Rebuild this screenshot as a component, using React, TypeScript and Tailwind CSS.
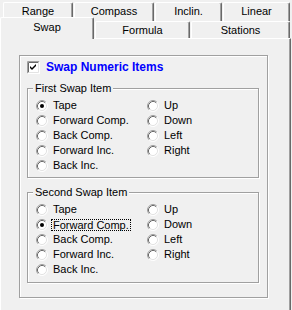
import React from 'react';

const Radio = ({ checked }: { checked?: boolean }) => (
  <svg width="12" height="12" viewBox="0 0 12 12" className="shrink-0">
    <circle cx="6" cy="6" r="5" fill="#fff" />
    <path d="M2.11 9.89 A5.5 5.5 0 0 1 9.89 2.11" fill="none" stroke="#a0a0a0" />
    <path d="M9.89 2.11 A5.5 5.5 0 0 1 2.11 9.89" fill="none" stroke="#fff" />
    <path d="M2.82 9.18 A4.5 4.5 0 0 1 9.18 2.82" fill="none" stroke="#696969" />
    <path d="M9.18 2.82 A4.5 4.5 0 0 1 2.82 9.18" fill="none" stroke="#e3e3e3" />
    {checked && <circle cx="6" cy="6" r="2" fill="#000" />}
  </svg>
);

const Checkbox = () => (
  <svg width="13" height="13" viewBox="0 0 13 13" className="shrink-0">
    <rect x="0" y="0" width="13" height="13" fill="#fff" />
    <path d="M0.5 12.5V0.5H12.5" fill="none" stroke="#a0a0a0" />
    <path d="M1.5 11.5V1.5H11.5" fill="none" stroke="#696969" />
    <path d="M0.5 12.5H12.5V0.5" fill="none" stroke="#fff" />
    <path d="M1.5 11.5H11.5V1.5" fill="none" stroke="#e3e3e3" />
    <path d="M3 5L5 7L9 3V5L5 9L3 7Z" fill="#000" />
  </svg>
);

const Option = ({ label, checked, focus }: { label: string; checked?: boolean; focus?: boolean }) => (
  <div className="flex items-center h-[15px] gap-[5px]">
    <Radio checked={checked} />
    {focus ? (
      <span className="border border-dotted border-black leading-[10px] px-[1px] -mx-[2px]">{label}</span>
    ) : (
      <span>{label}</span>
    )}
  </div>
);

const left = ['Tape', 'Forward Comp.', 'Back Comp.', 'Forward Inc.', 'Back Inc.'];
const right = ['Up', 'Down', 'Left', 'Right'];

const SwapGroup = ({ label, selected, focus, tall }: { label: string; selected: string; focus?: boolean; tall?: boolean }) => (
  <div
    className={`relative mt-[14px] w-[232px] ${tall ? 'h-[91px]' : 'h-[90px]'} border border-[#a0a0a0] shadow-[inset_1px_1px_0_#fff,1px_1px_0_#fff] pt-[9px] pl-[8px] flex`}
  >
    <span className="absolute left-[5px] top-[-7px] px-[2px] bg-[#f0f0f0]">{label}</span>
    <div className="flex flex-col w-[111px]">
      {left.map((l) => (
        <Option key={l} label={l} checked={l === selected} focus={focus && l === selected} />
      ))}
    </div>
    <div className="flex flex-col">
      {right.map((l) => (
        <Option key={l} label={l} />
      ))}
    </div>
  </div>
);

const tabEdge =
  'flex justify-center border-t border-l border-white border-r border-r-[#696969] shadow-[inset_-1px_0_0_#a0a0a0] rounded-t-[2px]';

export default function App() {
  return (
    <div className="w-[292px] h-[310px] bg-[#f0f0f0] overflow-hidden text-[11px] leading-[13px] text-black font-['Liberation_Sans',Arial,sans-serif]">
      <div className="flex gap-[1px] pl-[3px] pt-[2px] h-[21px]">
        <div className={`${tabEdge} w-[70px] h-[19px] pt-[2px]`}>Range</div>
        <div className={`${tabEdge} w-[80px] h-[19px] pt-[2px]`}>Compass</div>
        <div className={`${tabEdge} w-[67px] h-[19px] pt-[2px]`}>Inclin.</div>
        <div className={`${tabEdge} w-[67px] h-[19px] pt-[2px]`}>Linear</div>
      </div>
      <div className="flex items-end gap-[1px] h-[21px] mt-[-4px]">
        <div className={`${tabEdge} relative z-10 w-[94px] h-[22px] mb-[-1px] pt-[3px] bg-[#f0f0f0]`}>Swap</div>
        <div className={`${tabEdge} w-[95px] h-[17px] pt-[2px]`}>Formula</div>
        <div className={`${tabEdge} w-[99px] h-[17px] pt-[2px]`}>Stations</div>
      </div>
      <div className="w-[291px] h-[272px] border-t border-l border-white border-r border-r-[#696969] shadow-[inset_-1px_0_0_#a0a0a0] pl-[18px] pt-[16px]">
        <div className="w-[249px] h-[243px] border border-[#a0a0a0] shadow-[inset_1px_1px_0_#fff,1px_1px_0_#fff] pt-[5px] pl-[7px]">
          <div className="flex items-center gap-[6px] h-[13px]">
            <Checkbox />
            <span className="text-[12px] font-bold text-[#0000ff]">Swap Numeric Items</span>
          </div>
          <SwapGroup label="First Swap Item" selected="Tape" />
          <SwapGroup label="Second Swap Item" selected="Forward Comp." focus tall />
        </div>
      </div>
    </div>
  );
}
